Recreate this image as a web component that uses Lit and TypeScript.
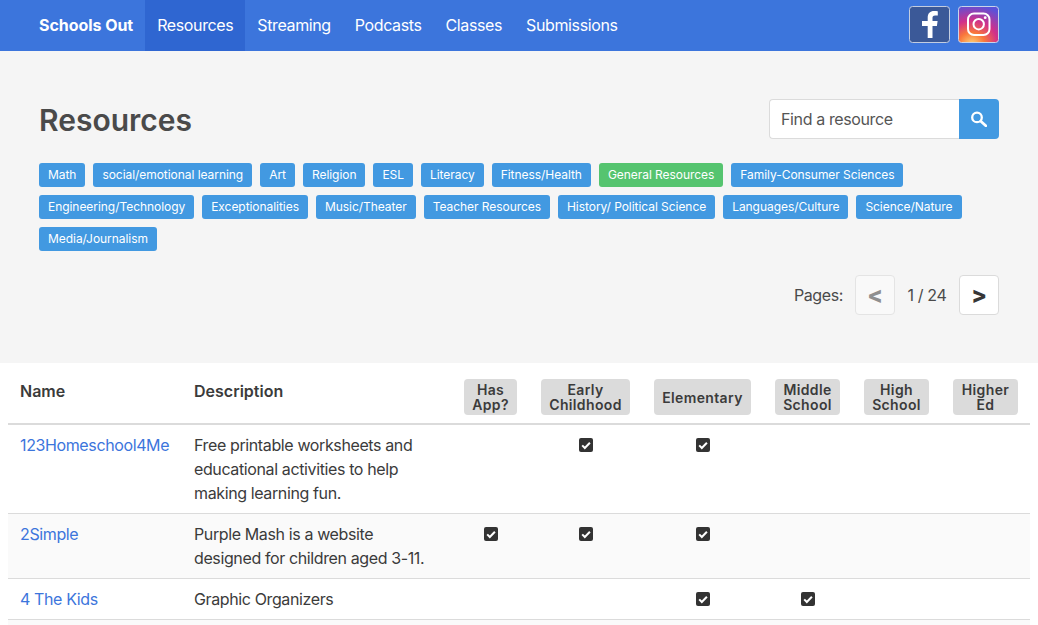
import { LitElement, html, css, svg } from "lit";
import { customElement } from "lit/decorators.js";

const NAV = ["Resources", "Streaming", "Podcasts", "Classes", "Submissions"];
const TAGS = ["Math", "social/emotional learning", "Art", "Religion", "ESL", "Literacy", "Fitness/Health", "General Resources", "Family-Consumer Sciences", "Engineering/Technology", "Exceptionalities", "Music/Theater", "Teacher Resources", "History/ Political Science", "Languages/Culture", "Science/Nature", "Media/Journalism"];
const COLS: string[][] = [["Has", "App?"], ["Early", "Childhood"], ["Elementary"], ["Middle", "School"], ["High", "School"], ["Higher", "Ed"]];
const ROWS: { name: string; desc: string[]; checks: number[] }[] = [
  { name: "123Homeschool4Me", desc: ["Free printable worksheets and", "educational activities to help", "making learning fun."], checks: [1, 2] },
  { name: "2Simple", desc: ["Purple Mash is a website", "designed for children aged 3-11."], checks: [0, 1, 2] },
  { name: "4 The Kids", desc: ["Graphic Organizers"], checks: [2, 3] },
];

const check = svg`<svg class="check" viewBox="0 0 14 14" width="14" height="14"><rect x="0" y="0" width="14" height="14" rx="2" fill="#333"/><path d="M3.200 7.400 5.800 10 10.900 4.700" fill="none" stroke="#fff" stroke-width="2"/></svg>`;

@customElement("app-root")
export class AppRoot extends LitElement {
  static styles = css`
    :host { display: block; font-family: Inter, "Liberation Sans", sans-serif; font-size: 16px; line-height: 24px; letter-spacing: -0.38px; color: #3b3b3b; background: #fff; height: 625px; overflow: hidden; }
    nav { height: 51px; background: #3c75dc; display: flex; align-items: stretch; padding: 0 39px; box-sizing: border-box; color: #fff; }
    .brand { font-weight: 700; letter-spacing: -0.05px; display: flex; align-items: center; padding: 0 12px 2px 0; }
    .item { display: flex; align-items: center; padding: 0 12px 2px; }
    .item.active { background: #2f66d1; }
    .social { margin-left: auto; display: flex; align-items: center; gap: 8px; padding-bottom: 2px; }
    .social svg { display: block; }
    .hero { background: #f5f5f5; height: 312px; box-sizing: border-box; padding: 48px 39px 0; }
    .top { display: flex; justify-content: space-between; align-items: center; height: 40px; margin-bottom: 24px; }
    h1 { margin: 0; padding-top: 2px; font-size: 30px; font-weight: 600; letter-spacing: 0; color: #4a4a4a; line-height: 40px; }
    .search { display: flex; }
    .input { width: 190px; height: 40px; box-sizing: border-box; background: #fff; border: 1px solid #dbdbdb; border-right: 0; border-radius: 4px 0 0 4px; padding: 7px 11px; color: #555; }
    .go { width: 40px; height: 40px; background: #4299e1; border-radius: 0 4px 4px 0; display: flex; align-items: center; justify-content: center; }
    .tags { display: flex; flex-wrap: wrap; gap: 8px; }
    .tag { height: 24px; display: flex; align-items: center; padding: 0 9px; border-radius: 3px; background: #4299e1; color: #fff; font-size: 12px; line-height: 18px; letter-spacing: -0.05px; }
    .tag.green { background: #55c46f; }
    .pager { display: flex; justify-content: flex-end; align-items: center; margin-top: 24px; color: #4a4a4a; }
    .pager .label { margin-right: 12px; }
    .btn { width: 40px; height: 40px; box-sizing: border-box; border: 1px solid #dbdbdb; border-radius: 4px; background: #fff; display: flex; align-items: center; justify-content: center; font-weight: 800; font-size: 23px; color: #363636; }
    .btn.off { background: #f9f9f9; border-color: #e4e4e4; color: #8f8f8f; }
    .count { width: 64px; text-align: center; }
    .wrap { padding: 0 8px; }
    table { border-collapse: separate; border-spacing: 0; table-layout: fixed; width: 1022px; }
    th { border-bottom: 2px solid #dbdbdb; padding: 16px 12px 8px; text-align: left; font-weight: 600; letter-spacing: 0; vertical-align: top; }
    td { border-bottom: 1px solid #dbdbdb; padding: 8px 12px; vertical-align: top; }
    tr.odd td { background: #fafafa; }
    a { color: #3c75dc; text-decoration: none; }
    .chip { display: flex; flex-direction: column; align-items: center; justify-content: center; background: #dbdbdb; border-radius: 4px; height: 36px; box-sizing: border-box; font-size: 14px; line-height: 15px; font-weight: 600; letter-spacing: 0.36px; white-space: nowrap; }
    .c { text-align: center; }
    .check { display: inline-block; vertical-align: top; margin-top: 5px; }
    .line { display: block; white-space: nowrap; }
    .filler td { height: 24px; border-bottom: 0; }
  `;

  render() {
    return html`
      <nav>
        <div class="brand">Schools Out</div>
        ${NAV.map((n, i) => html`<div class="item ${i === 0 ? "active" : ""}">${n}</div>`)}
        <div class="social">
          <svg width="41" height="37" viewBox="0 0 41 37">
            <rect x="0.5" y="0.5" width="40" height="36" rx="3" fill="#3b5998" stroke="#c3cde0"/>
            <path d="M23.500 32V20h4.400l.7-5h-5.100v-3.200c0-1.500.5-2.400 2.600-2.400h2.700V5.300c-.6-.1-2-.3-3.800-.3-3.800 0-6.300 2.300-6.300 6.500V15H13v5h5.700v12z" fill="#fff"/>
          </svg>
          <svg width="41" height="37" viewBox="0 0 41 37">
            <defs>
              <radialGradient id="ig" cx="0.33" cy="1.05" r="1.1">
                <stop offset="0" stop-color="#fed576"/>
                <stop offset="0.3" stop-color="#f9773b"/>
                <stop offset="0.6" stop-color="#d1308a"/>
                <stop offset="1" stop-color="#5b51d8"/>
              </radialGradient>
            </defs>
            <rect x="0.5" y="0.5" width="40" height="36" rx="3" fill="url(#ig)" stroke="#c9d3ea"/>
            <rect x="10" y="7.500" width="21.500" height="21.500" rx="6" fill="none" stroke="#fff" stroke-width="2"/>
            <circle cx="20.700" cy="18.200" r="5.200" fill="none" stroke="#fff" stroke-width="2"/>
            <circle cx="27.200" cy="11.700" r="1.400" fill="#fff"/>
          </svg>
        </div>
      </nav>
      <section class="hero">
        <div class="top">
          <h1>Resources</h1>
          <div class="search">
            <div class="input">Find a resource</div>
            <div class="go">
              <svg width="16" height="16" viewBox="0 0 16 16"><circle cx="6" cy="6.400" r="4.800" fill="none" stroke="#fff" stroke-width="2.300"/><path d="M9.800 10.200 14.800 14.800" stroke="#fff" stroke-width="2.700" stroke-linecap="round"/></svg>
            </div>
          </div>
        </div>
        <div class="tags">
          ${TAGS.map((t) => html`<div class="tag ${t === "General Resources" ? "green" : ""}">${t}</div>`)}
        </div>
        <div class="pager">
          <span class="label">Pages:</span>
          <div class="btn off">&lt;</div>
          <span class="count">1 / 24</span>
          <div class="btn">&gt;</div>
        </div>
      </section>
      <div class="wrap">
        <table>
          <colgroup>
            <col style="width:174px" /><col style="width:270px" /><col style="width:77px" /><col style="width:113px" /><col style="width:121px" /><col style="width:89px" /><col style="width:89px" /><col style="width:89px" />
          </colgroup>
          <thead>
            <tr>
              <th>Name</th>
              <th>Description</th>
              ${COLS.map((c) => html`<th><div class="chip">${c.map((l) => html`<span>${l}</span>`)}</div></th>`)}
            </tr>
          </thead>
          <tbody>
            ${ROWS.map((r, ri) => html`
              <tr class="${ri % 2 ? "odd" : ""}">
                <td><a>${r.name}</a></td>
                <td>${r.desc.map((l) => html`<span class="line">${l}</span>`)}</td>
                ${COLS.map((_, i) => html`<td class="c">${r.checks.includes(i) ? check : ""}</td>`)}
              </tr>`)}
            <tr class="odd filler"><td colspan="8"></td></tr>
          </tbody>
        </table>
      </div>
    `;
  }
}
